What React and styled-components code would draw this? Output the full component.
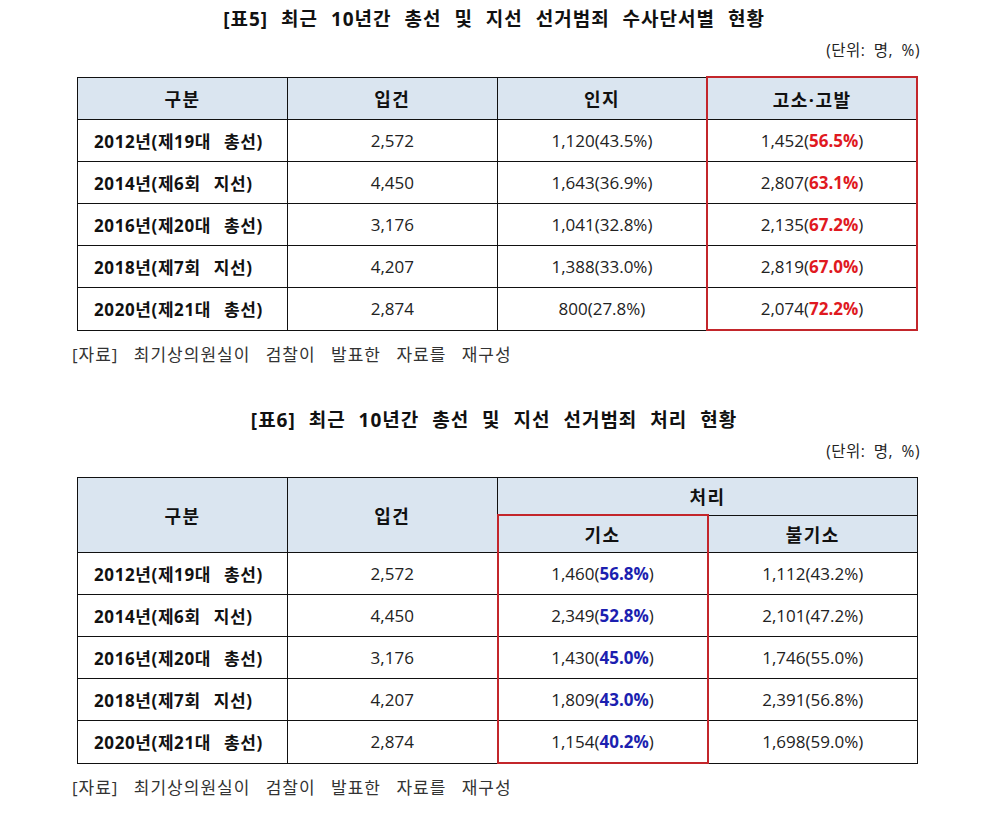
import styled, { createGlobalStyle } from "styled-components";

const GlobalStyle = createGlobalStyle`
  body {
    margin: 0;
    background: #ffffff;
    font-family: "Open Sans", "Noto Sans CJK KR", sans-serif;
    color: #111;
  }
`;

const table5 = [
  ["2012년(제19대 총선)", "2,572", "1,120(43.5%)", "1,452", "56.5%"],
  ["2014년(제6회 지선)", "4,450", "1,643(36.9%)", "2,807", "63.1%"],
  ["2016년(제20대 총선)", "3,176", "1,041(32.8%)", "2,135", "67.2%"],
  ["2018년(제7회 지선)", "4,207", "1,388(33.0%)", "2,819", "67.0%"],
  ["2020년(제21대 총선)", "2,874", "800(27.8%)", "2,074", "72.2%"],
];

const table6 = [
  ["2012년(제19대 총선)", "2,572", "1,460", "56.8%", "1,112(43.2%)"],
  ["2014년(제6회 지선)", "4,450", "2,349", "52.8%", "2,101(47.2%)"],
  ["2016년(제20대 총선)", "3,176", "1,430", "45.0%", "1,746(55.0%)"],
  ["2018년(제7회 지선)", "4,207", "1,809", "43.0%", "2,391(56.8%)"],
  ["2020년(제21대 총선)", "2,874", "1,154", "40.2%", "1,698(59.0%)"],
];

const Page = styled.div`
  width: 988px;
  height: 819px;
  padding-top: 6px;
  box-sizing: border-box;
`;

const Section = styled.section`
  margin-top: ${(p) => p.$top || 0}px;
`;

const Title = styled.h2`
  margin: 0;
  height: 26px;
  line-height: 26px;
  text-align: center;
  font-size: 19px;
  font-weight: 700;
  letter-spacing: 1px;
  word-spacing: 7px;
`;

const Unit = styled.div`
  width: 920px;
  margin-top: 8px;
  text-align: right;
  font-size: 15.5px;
  line-height: 20px;
  color: #222;
  letter-spacing: 0.5px;
  word-spacing: 4px;
`;

const Table = styled.table`
  margin: 16px 0 0 77px;
  width: 841px;
  border-collapse: collapse;
  table-layout: fixed;
`;

const Head = styled.th`
  background: #dae5f0;
  border: 1px solid #111;
  height: ${(p) => p.$h || 41}px;
  padding: 0;
  font-size: 18px;
  font-weight: 700;
  text-align: center;
  letter-spacing: 1.5px;
  ${(p) => p.$mark && "border-left: 2px solid #c3262b; border-right: 2px solid #c3262b;"}
  ${(p) => p.$markTop && "border-top: 2px solid #c3262b;"}
`;

const Label = styled.td`
  border: 1px solid #111;
  height: 41px;
  padding: 0 0 0 16px;
  text-align: left;
  font-size: 17px;
  font-weight: 700;
  letter-spacing: 0.6px;
  word-spacing: 8px;
`;

const Cell = styled.td`
  border: 1px solid #111;
  height: 41px;
  padding: 0;
  text-align: center;
  font-size: 17px;
  color: #222;
  ${(p) => p.$mark && "border-left: 2px solid #c3262b; border-right: 2px solid #c3262b;"}
  ${(p) => p.$markBottom && "border-bottom: 2px solid #c3262b;"}
`;

const Pct = styled.b`
  color: ${(p) => (p.$tone === "red" ? "#e0191f" : "#1c1fb0")};
`;

const Source = styled.p`
  margin: 11px 0 0 72px;
  font-size: 17px;
  line-height: 26px;
  color: #333;
  letter-spacing: 1px;
  word-spacing: 10px;
`;

function Table5() {
  return (
    <Table>
      <thead>
        <tr>
          <Head>구분</Head>
          <Head>입건</Head>
          <Head>인지</Head>
          <Head $mark $markTop>고소·고발</Head>
        </tr>
      </thead>
      <tbody>
        {table5.map((r, i) => (
          <tr key={r[0]}>
            <Label>{r[0]}</Label>
            <Cell>{r[1]}</Cell>
            <Cell>{r[2]}</Cell>
            <Cell $mark $markBottom={i === table5.length - 1}>
              {r[3]}(<Pct $tone="red">{r[4]}</Pct>)
            </Cell>
          </tr>
        ))}
      </tbody>
    </Table>
  );
}

function Table6() {
  return (
    <Table>
      <thead>
        <tr>
          <Head rowSpan={2}>구분</Head>
          <Head rowSpan={2}>입건</Head>
          <Head colSpan={2} $h={36}>처리</Head>
        </tr>
        <tr>
          <Head $h={36} $mark $markTop>기소</Head>
          <Head $h={36}>불기소</Head>
        </tr>
      </thead>
      <tbody>
        {table6.map((r, i) => (
          <tr key={r[0]}>
            <Label>{r[0]}</Label>
            <Cell>{r[1]}</Cell>
            <Cell $mark $markBottom={i === table6.length - 1}>
              {r[2]}(<Pct $tone="blue">{r[3]}</Pct>)
            </Cell>
            <Cell>{r[4]}</Cell>
          </tr>
        ))}
      </tbody>
    </Table>
  );
}

export default function App() {
  return (
    <Page>
      <GlobalStyle />
      <Section>
        <Title>[표5] 최근 10년간 총선 및 지선 선거범죄 수사단서별 현황</Title>
        <Unit>(단위: 명, %)</Unit>
        <Table5 />
        <Source>[자료] 최기상의원실이 검찰이 발표한 자료를 재구성</Source>
      </Section>
      <Section $top={39}>
        <Title>[표6] 최근 10년간 총선 및 지선 선거범죄 처리 현황</Title>
        <Unit>(단위: 명, %)</Unit>
        <Table6 />
        <Source>[자료] 최기상의원실이 검찰이 발표한 자료를 재구성</Source>
      </Section>
    </Page>
  );
}
